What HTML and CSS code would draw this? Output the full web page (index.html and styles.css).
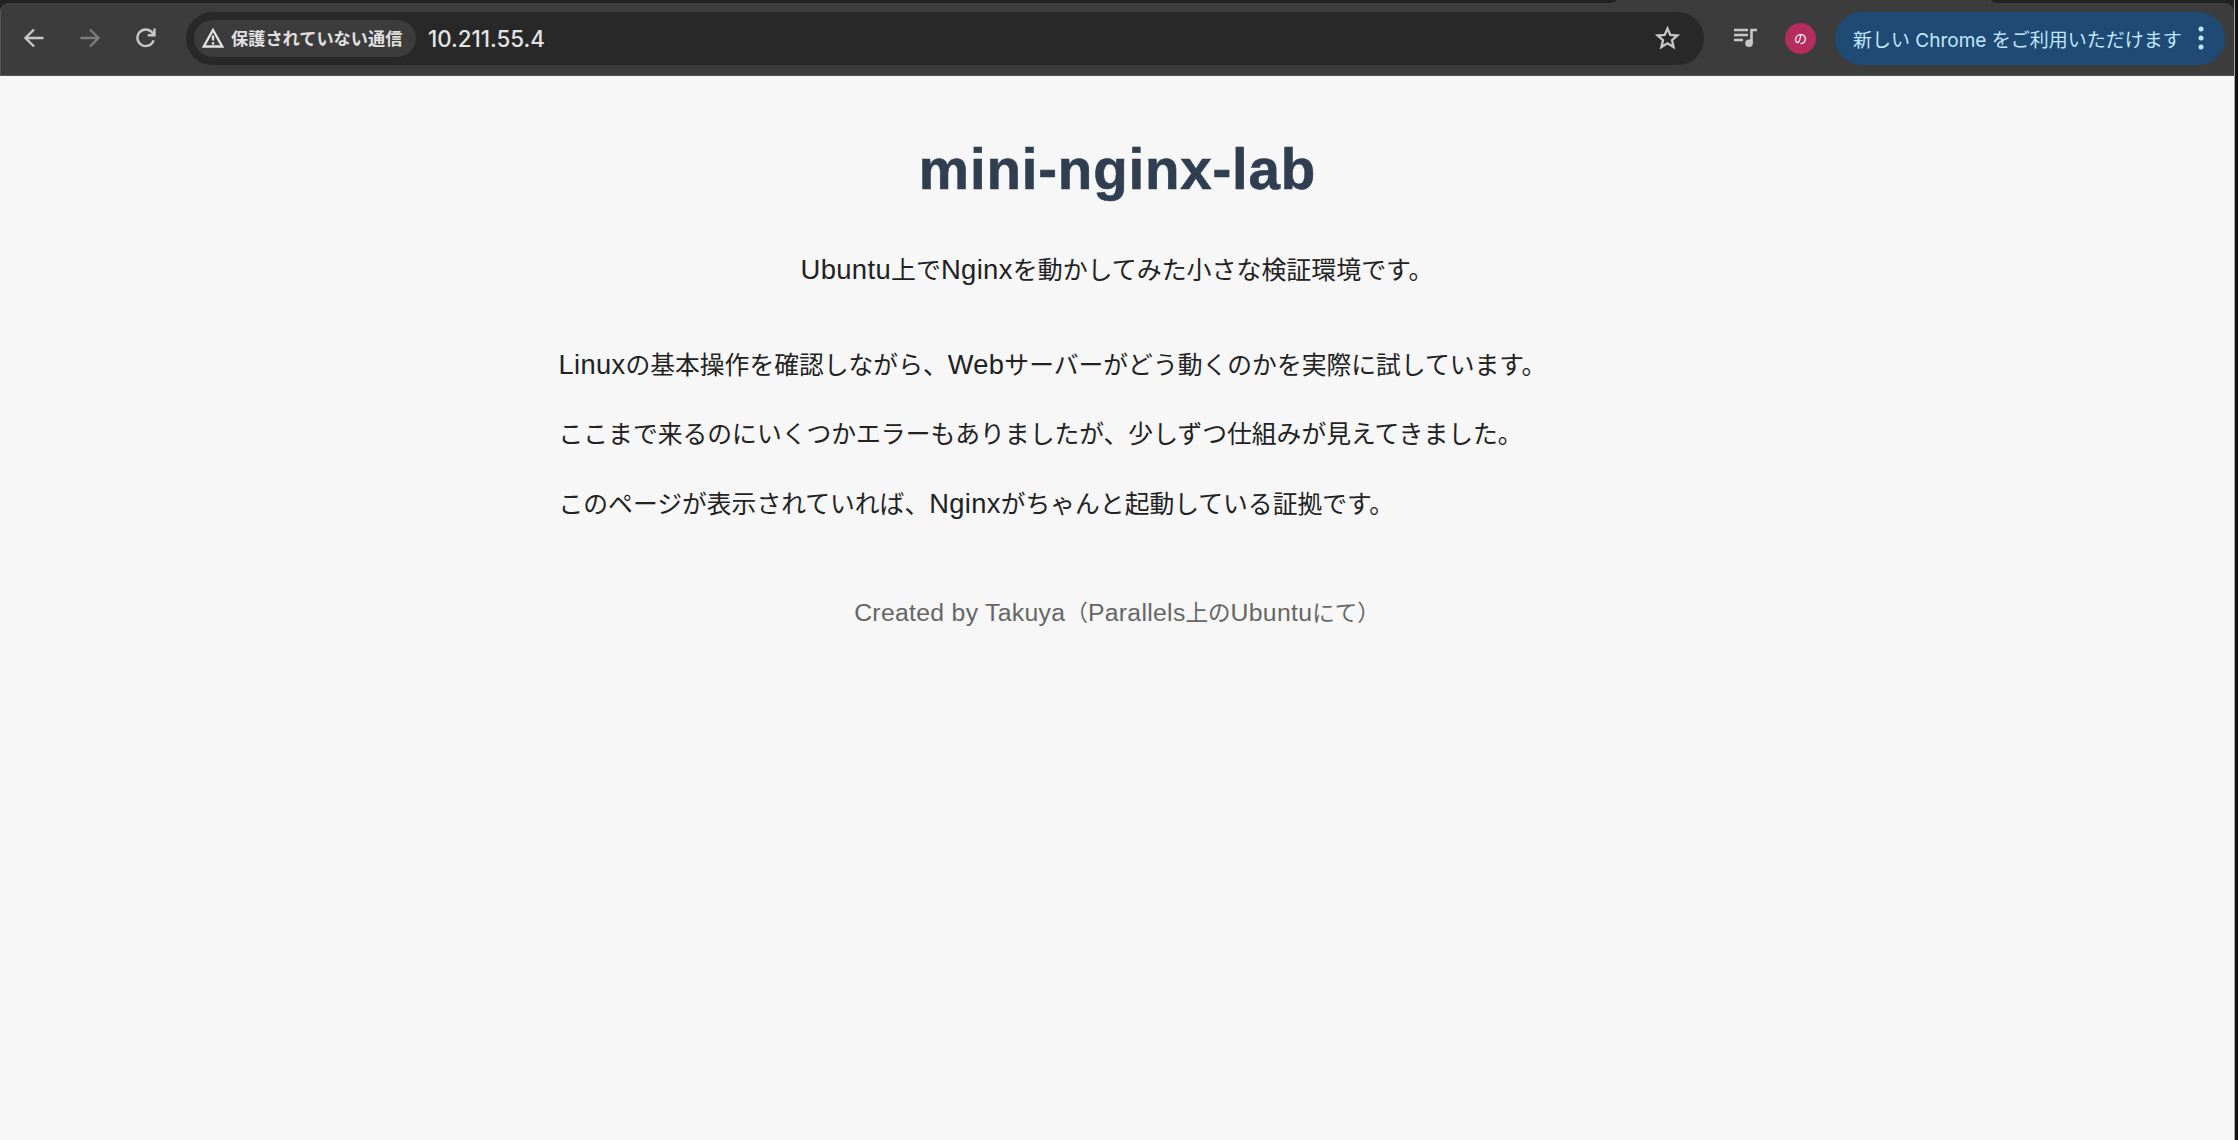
FILE: index.html
```
<!DOCTYPE html>
<html lang="ja">
<head>
<meta charset="utf-8">
<title>mini-nginx-lab</title>
<link rel="stylesheet" href="styles.css">
</head>
<body>
<div class="window">
  <div class="tabs"><i class="tab-edge tab-edge-left"></i><i class="tab-edge tab-edge-right"></i></div>
  <div class="toolbar-wrap">
  <header class="toolbar">
    <nav class="nav">
      <svg class="icon" width="20" height="20" viewBox="0 0 20 20"><path d="M19.5 10H2M10 1.5 1.5 10l8.5 8.5"/></svg>
      <svg class="icon icon-off" width="20" height="20" viewBox="0 0 20 20"><path d="M.5 10H18M10 1.5l8.5 8.5-8.5 8.5"/></svg>
      <svg class="icon" width="20" height="20" viewBox="0 0 20 20"><path d="M17.6 12.3A8.3 8.3 0 1 1 16.2 4.600L18.300 7M18.500.5V7.300H11.800"/></svg>
    </nav>
    <div class="omnibox">
      <div class="chip">
        <svg class="warn" width="22" height="20" viewBox="0 0 22 20"><path d="M11 2 20.200 18.500H1.800Z"/><path d="M11 7.500v5M11 14.300v2.200"/></svg>
        <span class="chip-text">保護されていない通信</span>
      </div>
      <span class="url">10.211.55.4</span>
      <svg class="star" width="25" height="24" viewBox="0 0 25 24"><path d="m12.500 2.500 2.800 6.400 7 .6-5.300 4.600 1.600 6.900-6.100-3.700-6.100 3.700L8 14.100 2.700 9.500l7-.6Z"/></svg>
    </div>
    <svg class="media" width="25" height="20" viewBox="0 0 25 20"><path d="M1 2h14M1 7h14M1 12h9M18.500 15V2H24"/><circle cx="16" cy="15.300" r="3.800"/></svg>
    <div class="avatar">の</div>
    <div class="update"><span class="update-text">新しい Chrome をご利用いただけます</span>
      <svg width="6" height="24" viewBox="0 0 6 24"><circle cx="3" cy="3" r="2.500"/><circle cx="3" cy="12" r="2.500"/><circle cx="3" cy="21" r="2.500"/></svg>
    </div>
  </header>
  </div>
  <main class="page">
    <h1 class="title">mini-nginx-lab</h1>
    <p class="lead"><span class="en">Ubuntu</span>上で<span class="en">Nginx</span>を動かしてみた小さな検証環境です。</p>
    <section class="content">
      <p><span class="en">Linux</span>の基本操作を確認しながら、<span class="en">Web</span>サーバーがどう動くのかを実際に試しています。</p>
      <p>ここまで来るのにいくつかエラーもありましたが、少しずつ仕組みが見えてきました。</p>
      <p>このページが表示されていれば、<span class="en">Nginx</span>がちゃんと起動している証拠です。</p>
    </section>
    <footer class="credit"><span class="en">Created by Takuya</span>（<span class="en">Parallels</span>上の<span class="en">Ubuntu</span>にて）</footer>
  </main>
</div>
</body>
</html>
```
FILE: styles.css
```
* { box-sizing: border-box; }
body { margin: 0; background: #111; font-family: "Noto Sans CJK JP", sans-serif; }
.window { width: 2235px; height: 1140px; overflow: hidden; display: flex; flex-direction: column; background: #3c3c3c; border-right: 1px solid #aaa; }
.tabs { height: 3px; flex: none; display: flex; justify-content: space-between; background: #3c3c3c; }
.tab-edge { background: #1f2221; }
.tab-edge-left { width: 1616px; border-bottom-right-radius: 8px 3px; }
.tab-edge-right { width: 243px; border-bottom-left-radius: 8px 3px; }
.toolbar-wrap { flex: none; background: #1f2221; }
.toolbar { height: 73px; display: flex; align-items: center; padding: 0 9px 2px 23px; background: #3c3c3c; border-left: 1px solid #555; border-bottom: 1px solid #555; border-radius: 9px 9px 0 0; }
.nav { display: flex; gap: 36px; }
.icon { fill: none; stroke: #c7c7c7; stroke-width: 2.4; }
.icon-off { stroke: #7c7c7c; }
.omnibox { width: 1518px; height: 53px; margin-left: 30px; padding: 0 24px 0 8px; border-radius: 27px; background: #282828; display: flex; align-items: center; }
.chip { width: 222px; height: 37px; padding-left: 8px; border-radius: 19px; background: #3c3c3c; display: flex; align-items: center; gap: 7px; }
.warn { fill: none; stroke: #e3e3e3; stroke-width: 2.3; }
.chip-text { font-size: 17.2px; font-weight: 700; line-height: 36px; color: #e0e0e0; white-space: nowrap; }
.url { margin: 1px 0 0 12px; font: 500 22.3px "Inter", sans-serif; color: #e3e3e3; }
.star { margin-left: auto; fill: none; stroke: #c7c7c7; stroke-width: 2.3; }
.media { margin-left: 29px; fill: none; stroke: #c7c7c7; stroke-width: 2.6; }
.media circle { fill: #c7c7c7; stroke: none; }
.avatar { width: 31px; height: 31px; margin-left: 27px; border-radius: 50%; background: #b52d5d; color: #fff; font-size: 13px; line-height: 30px; text-align: center; }
.update { width: 390px; height: 53px; margin-left: 19px; padding: 0 21px 0 18px; border-radius: 27px; background: #1f4a73; color: #c2e7ff; display: flex; align-items: center; justify-content: space-between; }
.update-text { font-family: "Inter", "Noto Sans CJK JP", sans-serif; font-size: 19px; white-space: nowrap; }
.update svg { fill: #c2e7ff; }
.page { flex: 1; background: #f7f7f7; color: #222; font-size: 24.8px; line-height: 44.5px; }
.page p { margin: 0; white-space: nowrap; }
.en { font-family: "Liberation Sans", sans-serif; font-size: 1.1em; line-height: 1; letter-spacing: .0125em; }
.page .title { margin: 43px 0 0; text-align: center; font: 700 56.5px/102px "Liberation Sans", sans-serif; letter-spacing: .8px; -webkit-text-stroke: .6px #2f3e50; color: #2f3e50; padding-left: 1px; }
.page .lead { margin-top: 25px; text-align: center; font-size: 24.95px; }
.content { width: 1117px; margin: 50px auto 0; display: flex; flex-direction: column; gap: 25px; }
.credit { margin-top: 65px; text-align: center; font-size: 22.5px; color: #666; }
```
